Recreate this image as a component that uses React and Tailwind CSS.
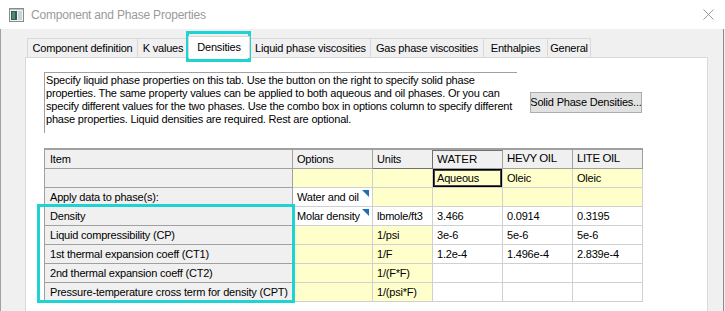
import React from "react";

const YEL = "bg-[#ffffcc]";
const WH = "bg-white";

const rows = [
  { item: "", opt: ["", YEL], unit: ["", YEL], vals: [["Aqueous", YEL, true], ["Oleic", YEL], ["Oleic", YEL]] },
  { item: "Apply data to phase(s):", opt: ["Water and oil", WH, true], unit: ["", YEL], vals: [["", YEL], ["", YEL], ["", YEL]] },
  { item: "Density", opt: ["Molar density", WH, true], unit: ["lbmole/ft3", WH], vals: [["3.466", WH], ["0.0914", WH], ["0.3195", WH]] },
  { item: "Liquid compressibility (CP)", opt: ["", YEL], unit: ["1/psi", YEL], vals: [["3e-6", WH], ["5e-6", WH], ["5e-6", WH]] },
  { item: "1st thermal expansion coeff (CT1)", opt: ["", YEL], unit: ["1/F", YEL], vals: [["1.2e-4", WH], ["1.496e-4", WH], ["2.839e-4", WH]] },
  { item: "2nd thermal expansion coeff (CT2)", opt: ["", YEL], unit: ["1/(F*F)", YEL], vals: [["", WH], ["", WH], ["", WH]] },
  { item: "Pressure-temperature cross term for density (CPT)", opt: ["", YEL], unit: ["1/(psi*F)", YEL], vals: [["", WH], ["", WH], ["", WH]] },
];

const tabs = [
  { label: "Component definition", w: "w-[110px]" },
  { label: "K values", w: "w-[51px]" },
  { label: "Densities", w: "w-[62px]", active: true },
  { label: "Liquid phase viscosities", w: "w-[120px]" },
  { label: "Gas phase viscosities", w: "w-[113px]" },
  { label: "Enthalpies", w: "w-[64px]" },
  { label: "General", w: "w-[44px]", last: true },
];

function AppIcon() {
  return (
    <svg width="15" height="14" viewBox="0 0 15 14">
      <rect x="0.5" y="0.5" width="14" height="13" fill="#f4f4f4" stroke="#8a8a8a" />
      <rect x="2" y="3" width="6" height="9" fill="#2f5d4e" />
      <rect x="3" y="4" width="3" height="7" fill="#4f8a72" />
      <rect x="9" y="3" width="4" height="9" fill="#c9d3dc" />
      <rect x="1" y="1" width="13" height="1" fill="#b9c3cc" />
    </svg>
  );
}

function Corner() {
  return (
    <svg className="absolute right-[3px] top-[2px]" width="7" height="7" viewBox="0 0 7 7">
      <polygon points="0,0 7,0 7,7" fill="#1f6fb2" />
    </svg>
  );
}

function DataRow({ row }) {
  return (
    <div className="flex h-[19px]">
      <div className="flex w-[248px] shrink-0 items-center whitespace-nowrap border-b border-r border-[#a0a0a0] bg-[#f0f0f0] pl-[5px]">
        {row.item}
      </div>
      <div className={`relative flex w-[80px] shrink-0 items-center whitespace-nowrap border-b border-r border-[#d0d0d0] pl-[4px] ${row.opt[1]}`}>
        {row.opt[0]}
        {row.opt[2] && <Corner />}
      </div>
      <div className={`flex w-[60px] shrink-0 items-center whitespace-nowrap border-b border-r border-[#d0d0d0] pl-[4px] ${row.unit[1]}`}>
        {row.unit[0]}
      </div>
      {row.vals.map(([text, bg, focus], i) => (
        <div
          key={i}
          className={`flex w-[70px] shrink-0 items-center whitespace-nowrap border-b border-r border-[#d0d0d0] pl-[4px] ${bg} ${
            focus ? "shadow-[inset_0_0_0_1px_#000,inset_0_0_0_2px_#444]" : ""
          }`}
        >
          {text}
        </div>
      ))}
    </div>
  );
}

export default function App() {
  return (
    <div className="relative h-[311px] w-[725px] overflow-hidden bg-[#f0f0f0] font-['Liberation_Sans',Arial,sans-serif] text-[11px] tracking-[-0.2px] text-black">
      {/* title bar */}
      <div className="flex h-[29px] items-center bg-white">
        <div className="ml-[9px]">
          <AppIcon />
        </div>
        <span className="ml-[7px] text-[12px] text-[#9a9a9a]">Component and Phase Properties</span>
        <svg className="ml-auto mr-[11px]" width="11" height="11" viewBox="0 0 11 11">
          <path d="M0.5 0.5 L10.5 10.5 M10.5 0.5 L0.5 10.5" stroke="#9a9a9a" strokeWidth="1" />
        </svg>
      </div>

      <div className="flex h-[282px]">
        <div className="w-[25px] shrink-0 border-l border-[#a0a0a0]" />

        <div className="flex w-[683px] shrink-0 flex-col">
          {/* tab strip */}
          <div className="mt-[9px] flex h-[19px] items-end pl-[2px]">
            {tabs.map((t) =>
              t.active ? (
                <div
                  key={t.label}
                  className={`relative z-10 -mb-px flex h-[22px] ${t.w} shrink-0 items-center justify-center whitespace-nowrap border-x border-t border-[#d9d9d9] bg-white pb-px`}
                >
                  {t.label}
                </div>
              ) : (
                <div
                  key={t.label}
                  className={`flex h-[19px] ${t.w} shrink-0 items-center justify-center whitespace-nowrap border-l border-t border-[#d9d9d9] bg-[#f0f0f0] ${
                    t.last ? "border-r" : ""
                  }`}
                >
                  {t.label}
                </div>
              )
            )}
          </div>

          {/* tab page */}
          <div className="flex-1 border-x border-t border-[#d9d9d9] bg-white pl-[18px] pt-[14px]">
            <div className="flex items-start">
              <div className="h-[61px] w-[473px] shrink-0 border-l border-t border-[#a0a0a0] pl-px pt-px leading-[13px]">
                <div className="whitespace-nowrap">Specify liquid phase properties on this tab. Use the button on the right to specify solid phase</div>
                <div className="whitespace-nowrap">properties. The same property values can be applied to both aqueous and oil phases. Or you can</div>
                <div className="whitespace-nowrap">specify different values for the two phases. Use the combo box in options column to specify different</div>
                <div className="whitespace-nowrap">phase properties. Liquid densities are required. Rest are optional.</div>
              </div>
              <button className="ml-[13px] mt-[20px] flex h-[21px] w-[112px] shrink-0 items-center justify-center overflow-hidden whitespace-nowrap border border-[#adadad] bg-[#e1e1e1]">
                Solid Phase Densities...
              </button>
            </div>

            {/* grid */}
            <div className="mt-[15px] w-[599px] border-l border-t-2 border-[#a0a0a0]">
              <div className="flex h-[19px]">
                <div className="flex w-[248px] shrink-0 items-center border-b border-r border-[#a0a0a0] bg-[#f0f0f0] pl-[5px]">Item</div>
                <div className="flex w-[80px] shrink-0 items-center border-b border-r border-[#a0a0a0] bg-[#f0f0f0] pl-[4px]">Options</div>
                <div className="flex w-[60px] shrink-0 items-center border-b border-r border-[#707070] bg-[#f0f0f0] pl-[4px]">Units</div>
                <div className="flex w-[70px] shrink-0 items-center border-b border-r border-t border-[#a0a0a0] border-t-[#707070] bg-[#f0f0f0] pl-[4px] text-[11.5px] tracking-normal">WATER</div>
                <div className="flex w-[70px] shrink-0 items-center border-b border-r border-[#a0a0a0] bg-[#f0f0f0] pl-[4px] text-[11.5px] tracking-[-0.4px]">HEVY OIL</div>
                <div className="flex w-[70px] shrink-0 items-center border-b border-r border-[#a0a0a0] bg-[#f0f0f0] pl-[4px] text-[11.5px] tracking-[-0.4px]">LITE OIL</div>
              </div>
              {rows.map((r, i) => (
                <DataRow key={i} row={r} />
              ))}
            </div>
          </div>
        </div>

        <div className="w-[15px] shrink-0" />
        <div className="w-px shrink-0 bg-[#8c8c8c]" />
      </div>

      {/* annotation highlights */}
      <div className="absolute left-[186px] top-[31px] h-[31px] w-[65px] border-[3px] border-[#1fd3d3]" />
      <div className="absolute left-[37px] top-[204px] h-[99px] w-[258px] border-[3px] border-[#1fd3d3]" />
    </div>
  );
}
